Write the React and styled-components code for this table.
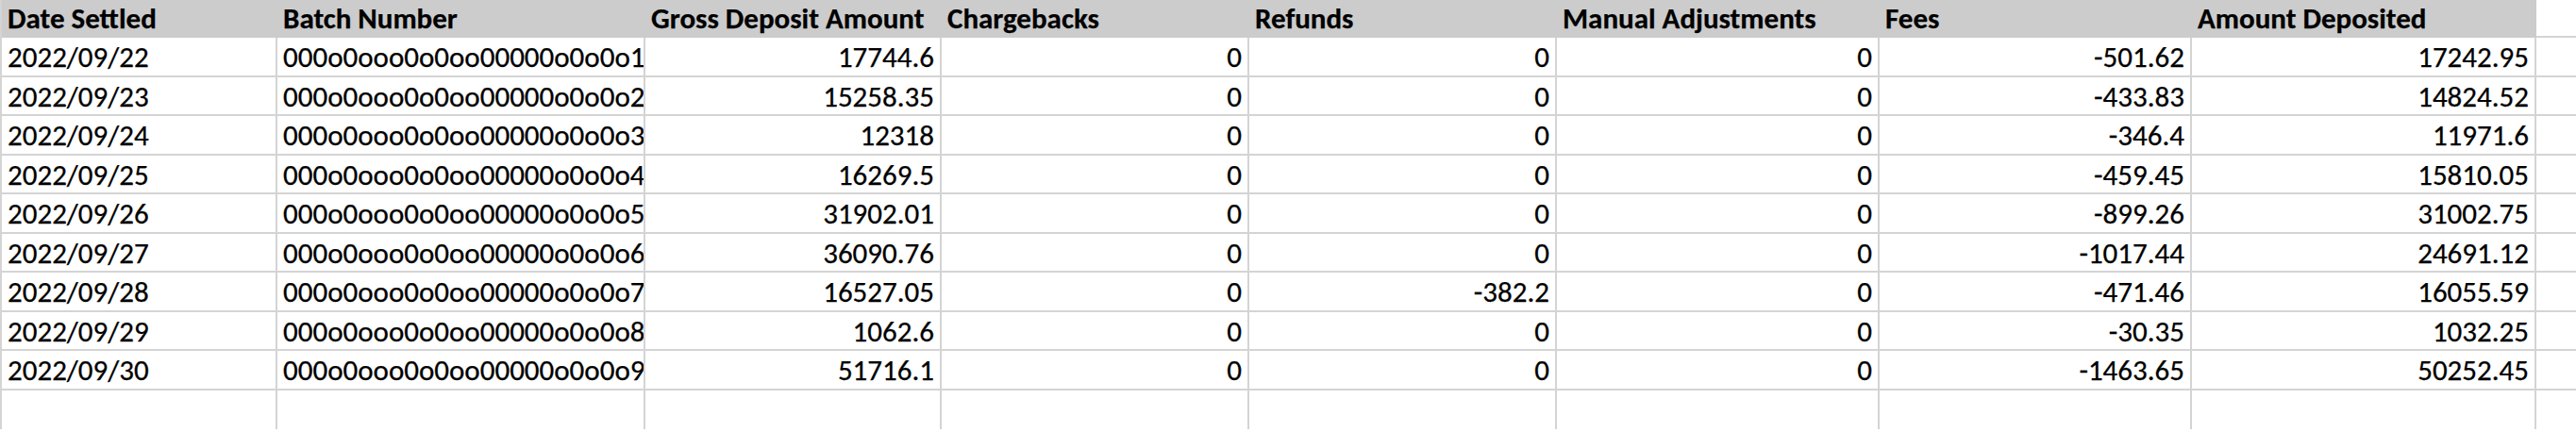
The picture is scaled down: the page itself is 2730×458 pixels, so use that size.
import React from 'react';
import styled, { createGlobalStyle } from 'styled-components';

const GlobalStyle = createGlobalStyle`
  html, body {
    margin: 0;
    padding: 0;
    background: #ffffff;
  }
  body {
    font-family: Carlito, Calibri, "Liberation Sans", Arial, sans-serif;
    color: #000;
    -webkit-text-stroke: 0.25px #000;
  }
`;

const COLS = '292px 390px 314px 326px 326px 342px 331px 365px 120px';

const Viewport = styled.div`
  width: 2730px;
  height: 458px;
  overflow: hidden;
`;

const Sheet = styled.div`
  display: grid;
  grid-template-columns: ${COLS};
  grid-template-rows: 40px;
  grid-auto-rows: 41.5px;
  width: max-content;
  border-left: 2px solid #d4d4d4;
`;

const HeadCell = styled.div`
  background: ${(p) => (p.$blank ? '#ffffff' : '#cccccc')};
  font-weight: 700;
  font-size: 31px;
  line-height: normal;
  padding: 0 6px;
  white-space: nowrap;
  box-sizing: border-box;
  border-bottom: ${(p) => (p.$blank ? '2px solid #d4d4d4' : 'none')};
`;

const Cell = styled.div`
  font-size: 31px;
  line-height: 41px;
  padding: 0 6px;
  text-align: ${(p) => (p.$num ? 'right' : 'left')};
  white-space: nowrap;
  overflow: hidden;
  box-sizing: border-box;
  border-right: 2px solid #d4d4d4;
  border-bottom: ${(p) => (p.$open ? 'none' : '2px solid #d4d4d4')};
`;

const headers = [
  'Date Settled',
  'Batch Number',
  'Gross Deposit Amount',
  'Chargebacks',
  'Refunds',
  'Manual Adjustments',
  'Fees',
  'Amount Deposited',
];

const rows = [
  ['2022/09/22', '000o0ooo0o0oo00000o0o0o1', '17744.6', '0', '0', '0', '-501.62', '17242.95'],
  ['2022/09/23', '000o0ooo0o0oo00000o0o0o2', '15258.35', '0', '0', '0', '-433.83', '14824.52'],
  ['2022/09/24', '000o0ooo0o0oo00000o0o0o3', '12318', '0', '0', '0', '-346.4', '11971.6'],
  ['2022/09/25', '000o0ooo0o0oo00000o0o0o4', '16269.5', '0', '0', '0', '-459.45', '15810.05'],
  ['2022/09/26', '000o0ooo0o0oo00000o0o0o5', '31902.01', '0', '0', '0', '-899.26', '31002.75'],
  ['2022/09/27', '000o0ooo0o0oo00000o0o0o6', '36090.76', '0', '0', '0', '-1017.44', '24691.12'],
  ['2022/09/28', '000o0ooo0o0oo00000o0o0o7', '16527.05', '0', '-382.2', '0', '-471.46', '16055.59'],
  ['2022/09/29', '000o0ooo0o0oo00000o0o0o8', '1062.6', '0', '0', '0', '-30.35', '1032.25'],
  ['2022/09/30', '000o0ooo0o0oo00000o0o0o9', '51716.1', '0', '0', '0', '-1463.65', '50252.45'],
];

const App = () => (
  <>
    <GlobalStyle />
    <Viewport>
      <Sheet>
        {headers.map((h) => (
          <HeadCell key={h}>{h}</HeadCell>
        ))}
        <HeadCell $blank />
        {rows.map((r) => (
          <React.Fragment key={r[0]}>
            {r.map((v, i) => (
              <Cell key={i} $num={i > 1}>{v}</Cell>
            ))}
            <Cell />
          </React.Fragment>
        ))}
        {Array.from({ length: 9 }).map((_, i) => (
          <Cell key={`e${i}`} $open />
        ))}
      </Sheet>
    </Viewport>
  </>
);

export default App;
